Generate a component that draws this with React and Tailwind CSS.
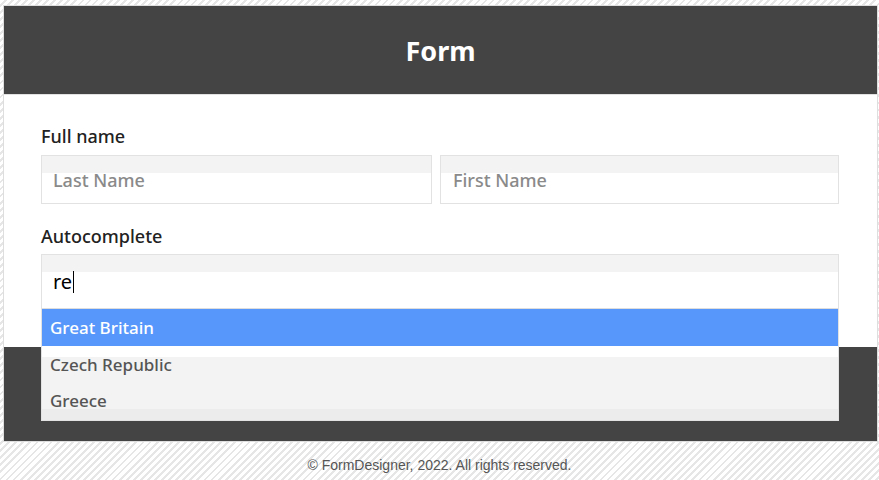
export default function App() {
  return (
    <div className="w-[879px] h-[480px] overflow-hidden bg-[repeating-linear-gradient(135deg,#ffffff_0px,#ffffff_3px,#e6e6e6_3px,#e6e6e6_5px)] pt-[5px] pl-[3px]">
      <div className="w-[875px] border border-[#dedede] bg-white font-['Noto_Sans',sans-serif]">
        <div className="h-[89px] bg-[#444444] flex items-center justify-center border-b border-[#e2e2e2]">
          <h1 className="text-white text-[27px] font-bold leading-none">Form</h1>
        </div>
        <div className="relative">
          <div className="h-[252px] px-[37px] pt-[30px]">
            <div className="text-[18px] font-medium text-[#222] leading-[22px]">Full name</div>
            <div className="mt-[8px] flex gap-[8px] pr-[1px]">
              <div className="w-[391px] h-[49px] border border-[#e2e2e2] bg-[linear-gradient(#f3f3f3_0px,#f3f3f3_17px,#ffffff_17px)] flex items-center pl-[11px] pt-[2px] text-[18px] font-medium text-[#8a8a8a]">Last Name</div>
              <div className="w-[399px] h-[49px] border border-[#e2e2e2] bg-[linear-gradient(#f3f3f3_0px,#f3f3f3_17px,#ffffff_17px)] flex items-center pl-[12px] pt-[2px] text-[18px] font-medium text-[#8a8a8a]">First Name</div>
            </div>
            <div className="mt-[21px] text-[18px] font-medium text-[#222] leading-[22px]">Autocomplete</div>
            <div className="relative mt-[7px] w-[798px] z-10">
              <div className="h-[54px] border border-[#e2e2e2] border-b-0 bg-[linear-gradient(#f3f3f3_0px,#f3f3f3_17px,#ffffff_17px)] flex items-center pl-[11px] pt-[1px] text-[20px] text-black">
                re<span className="inline-block w-[1px] h-[22px] bg-black ml-[1px]"></span>
              </div>
              <div className="border border-t-0 border-[#e2e2e2]">
                <div className="h-[38px] bg-[#5797fb] text-white text-[17px] font-medium flex items-center pl-[8px] border-t border-[#dddddd]">Great Britain</div>
                <div className="bg-[linear-gradient(#ffffff_0px,#ffffff_11px,#f3f3f3_11px,#f3f3f3_63px,#ececec_63px)]">
                  <div className="h-[37px] text-[#555] text-[17px] font-medium flex items-center pl-[8px] pt-[1px]">Czech Republic</div>
                  <div className="h-[37px] text-[#555] text-[17px] font-medium flex items-center pl-[8px] pb-[1px]">Greece</div>
                </div>
              </div>
            </div>
          </div>
          <div className="h-[94px] bg-[#444444]"></div>
        </div>
      </div>
      <div className="mt-[13px] text-center text-[14px] text-[#555] pr-[3px] font-['Liberation_Sans',sans-serif]">© FormDesigner, 2022. All rights reserved.</div>
    </div>
  );
}
